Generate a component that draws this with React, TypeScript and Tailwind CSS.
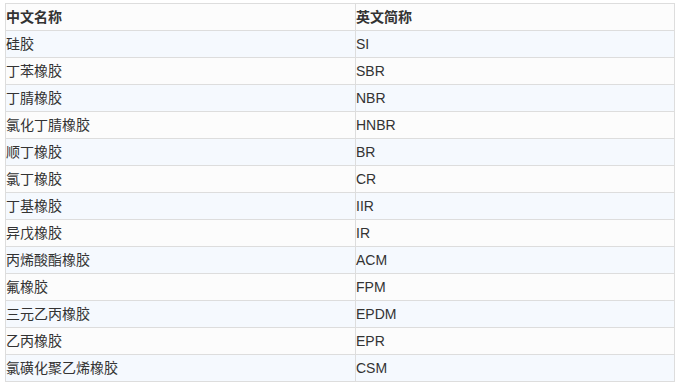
import React from 'react';

const rows: [string, string][] = [
    ['硅胶', 'SI'],
    ['丁苯橡胶', 'SBR'],
    ['丁腈橡胶', 'NBR'],
    ['氯化丁腈橡胶', 'HNBR'],
    ['顺丁橡胶', 'BR'],
    ['氯丁橡胶', 'CR'],
    ['丁基橡胶', 'IIR'],
    ['异戊橡胶', 'IR'],
    ['丙烯酸酯橡胶', 'ACM'],
    ['氟橡胶', 'FPM'],
    ['三元乙丙橡胶', 'EPDM'],
    ['乙丙橡胶', 'EPR'],
    ['氯磺化聚乙烯橡胶', 'CSM'],
];

const App: React.FC = () => {
    return (
        <div className="w-[680px] h-[386px] bg-white pt-[3px] pl-[5px] font-['Liberation_Sans','Noto_Sans_CJK_SC',sans-serif] text-[14px] text-[#333]">
            <table className="w-[670px] border-collapse table-fixed">
                <colgroup>
                    <col className="w-[350px]" />
                    <col />
                </colgroup>
                <thead>
                    <tr className="h-[27px] bg-[#fcfcfc]">
                        <th className="border border-[#dddddd] text-left font-bold p-0 align-middle">中文名称</th>
                        <th className="border border-[#dddddd] text-left font-bold p-0 align-middle">英文简称</th>
                    </tr>
                </thead>
                <tbody>
                    {rows.map(([cn, en], i) => (
                        <tr key={en} className={`h-[27px] ${i % 2 === 0 ? 'bg-[#f5f9fe]' : 'bg-[#fcfcfc]'}`}>
                            <td className="border border-[#dddddd] p-0 align-middle">{cn}</td>
                            <td className="border border-[#dddddd] p-0 align-middle">{en}</td>
                        </tr>
                    ))}
                </tbody>
            </table>
        </div>
    );
};

export default App;
